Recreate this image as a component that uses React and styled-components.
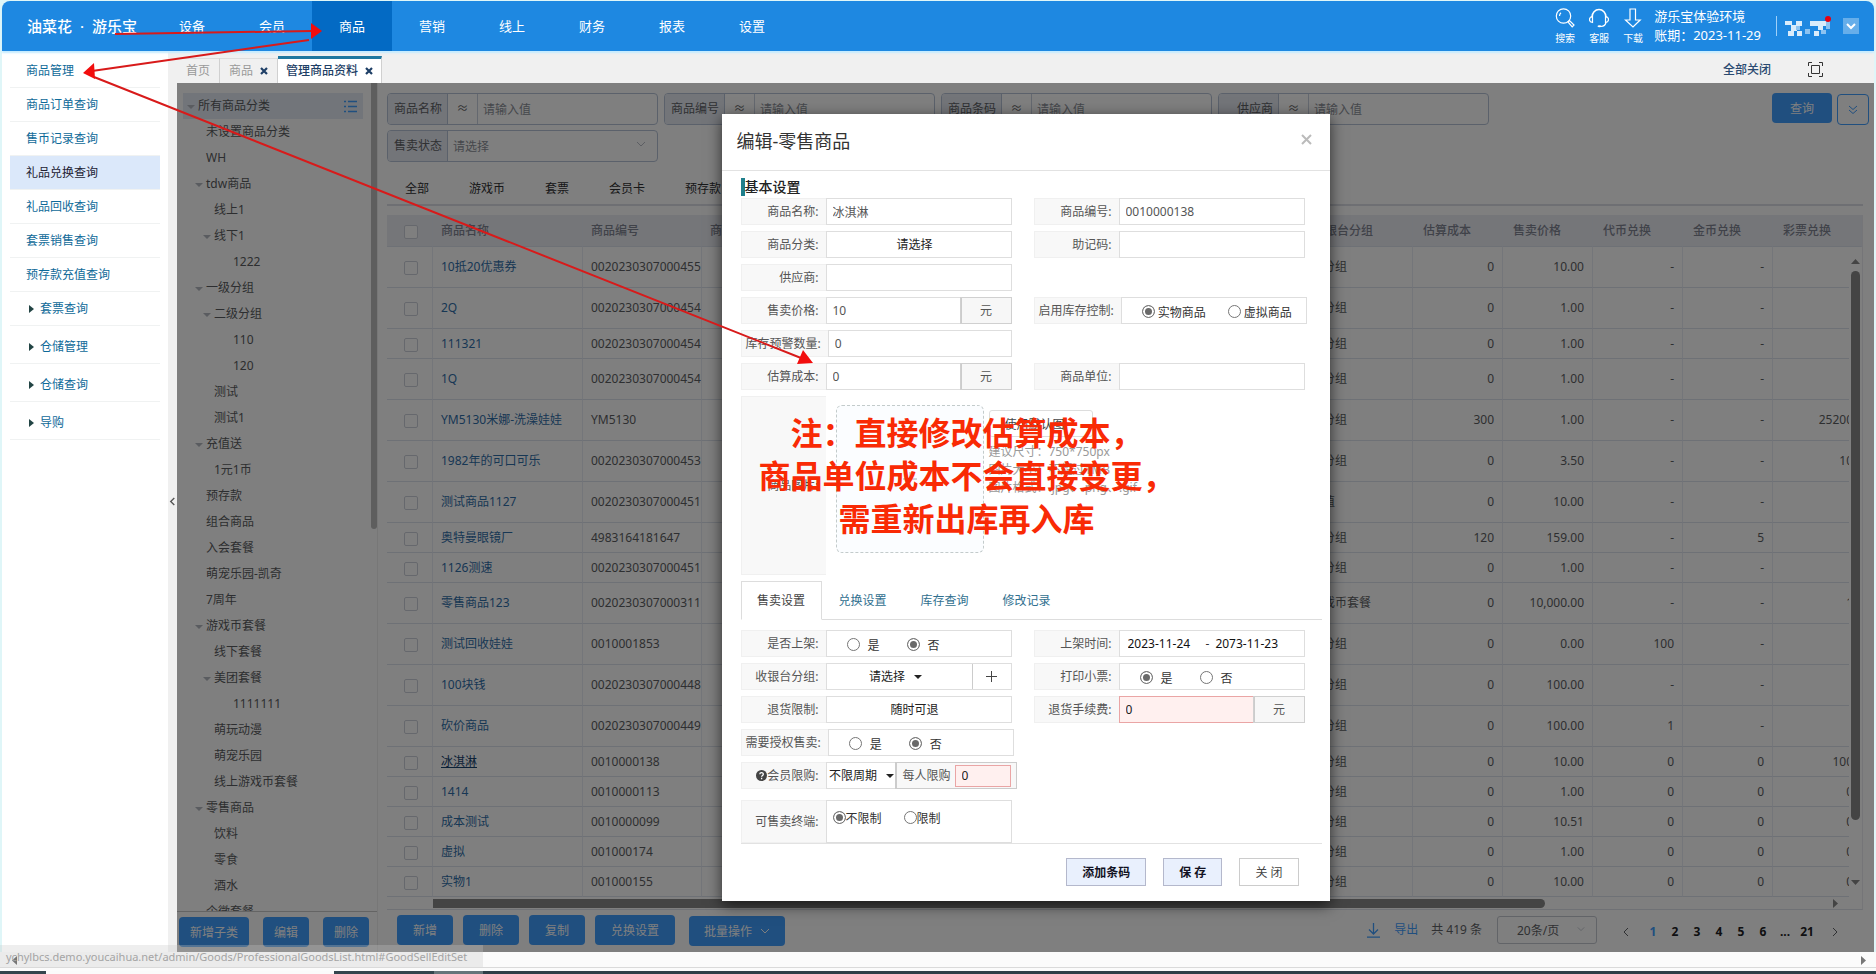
import React from "react";
import styled, { createGlobalStyle, css } from "styled-components";

const Global = createGlobalStyle`
  *, *::before, *::after { box-sizing: border-box; }
  html, body, #root { height: 100%; }
  body { margin: 0; background: #f6f8f8; overflow: hidden; }
  body, button, input, select, textarea {
    font-family: "Noto Sans", "Noto Sans CJK SC", "Liberation Sans", sans-serif;
    font-size: 12px;
  }
  a { text-decoration: none; }
  ul { list-style: none; margin: 0; padding: 0; }
`;

/* ---------- shell ---------- */
const Page = styled.div`
  position: relative;
  height: 100vh;
  padding: 1px 2px 0;
  display: flex;
  flex-direction: column;
  color: #333;
  line-height: 18px;
  background: #dff6f8;
`;
const Header = styled.header`
  position: relative;
  flex: none;
  height: 50px;
  display: flex;
  align-items: center;
  border-radius: 8px 8px 0 0;
  background: #1e88e1;
  color: #fff;
  box-shadow: 0 2px 2px #c4ebff;
  z-index: 1;
`;
const Logo = styled.a`
  width: 150px;
  padding-left: 25px;
  display: flex;
  gap: 8px;
  color: #fff;
  font-size: 15px;
  font-weight: 500;
`;
const Nav = styled.nav`
  display: flex;
  height: 100%;
  flex: 1;
`;
const NavLink = styled.a`
  width: 80px;
  display: flex;
  align-items: center;
  justify-content: center;
  font-size: 13px;
  color: #fff;
  background: ${(p) => (p.$active ? "#036ac4" : "transparent")};
`;
const Tools = styled.div`
  display: flex;
  align-items: center;
  padding-right: 15px;
`;
const Tool = styled.a`
  width: 34px;
  display: flex;
  flex-direction: column;
  align-items: center;
  gap: 3px;
  font-size: 10px;
  line-height: 14px;
  color: #fff;
`;
const Env = styled.div`
  padding: 0 15px 0 4px;
  font-size: 13px;
  line-height: 19px;
  white-space: nowrap;
`;
const Divider = styled.i`
  width: 1px;
  height: 20px;
  background: #9fd0f8;
`;
const Avatar = styled.span`
  padding: 0 10px 0 8px;
  display: flex;
`;
const Drop = styled.button`
  width: 16px;
  height: 16px;
  padding: 0;
  border: 0;
  background: #66aeea;
  display: flex;
  align-items: center;
  justify-content: center;
`;
const Middle = styled.div`
  flex: 1;
  min-height: 0;
  display: flex;
`;
const Sidebar = styled.nav`
  flex: none;
  width: 166px;
  padding: 3px 8px 0;
  background: #fff;
`;
const SideLink = styled.a`
  display: flex;
  align-items: center;
  gap: 6px;
  height: ${(p) => (p.$group ? 38 : 34)}px;
  padding-top: ${(p) => (p.$group ? 4 : 0)}px;
  padding-left: ${(p) => (p.$arrow ? 19 : 16)}px;
  border-bottom: 1px solid #f0f2f2;
  color: ${(p) => (p.$active ? "#223" : "#0f6a99")};
  background: ${(p) => (p.$active ? "#dbe8fa" : "transparent")};
`;
const Collapse = styled.button`
  flex: none;
  width: 9px;
  padding: 0;
  border: 0;
  background: #f0f0f0;
  display: flex;
  align-items: center;
  justify-content: center;
`;
const Work = styled.div`
  flex: 1;
  min-width: 0;
  display: flex;
  flex-direction: column;
`;
const PageTabs = styled.div`
  flex: none;
  height: 32px;
  display: flex;
  align-items: flex-end;
  background: #f0f0f0;
  padding-right: 51px;
`;
const PageTab = styled.a`
  height: ${(p) => (p.$active ? 27 : 25)}px;
  display: flex;
  align-items: center;
  gap: 7px;
  padding: 0 ${(p) => (p.$active ? 8 : 9)}px;
  border-right: 1px solid #d0d0d0;
  border-top: ${(p) => (p.$active ? "3px solid #1f78a0" : "1px solid #ddd")};
  background: ${(p) => (p.$active ? "#fff" : "#f0f0f0")};
  color: ${(p) => (p.$active ? "#1e3f66" : "#999")};
  font-weight: ${(p) => (p.$active ? 500 : 400)};
`;
const TabX = styled.span`
  color: #1e3f66;
  display: flex;
`;
const CloseAll = styled.a`
  margin-left: auto;
  padding-bottom: 4px;
  color: #2a4a70;
  font-weight: 500;
`;
const FullBtn = styled.button`
  margin-left: 37px;
  padding: 0 0 6px;
  border: 0;
  background: none;
  display: flex;
`;
const Stage = styled.div`
  position: relative;
  flex: 1;
  min-height: 0;
  display: flex;
  background: #fff;
`;
const Bottom = styled.div`
  flex: none;
  height: 22px;
  margin: 0 -2px;
  background: #fbfbfb;
  border-bottom: 3px solid #2f3f47;
  display: flex;
  align-items: flex-start;
  justify-content: space-between;
  padding: 4px 8px 0 10px;
`;
const Tray = styled.div`
  position: absolute;
  left: 0;
  right: 0;
  bottom: 0;
  height: 7px;
  border-top: 1px solid #dadada;
  display: flex;
  align-items: flex-end;
`;
const TrayPart = styled.i`
  height: 3px;
  width: ${(p) => p.$w}px;
  background: ${(p) => p.$c};
`;
const Status = styled.div`
  position: absolute;
  left: 0;
  bottom: 7px;
  width: 483px;
  height: 22px;
  padding: 3px 6px 0;
  font-size: 11px;
  background: rgba(200, 200, 200, 0.3);
  color: #a4a4a4;
  white-space: nowrap;
`;

/* ---------- category tree ---------- */
const TreePane = styled.aside`
  flex: none;
  width: 200px;
  display: flex;
  flex-direction: column;
  position: relative;
`;
const TreeScroll = styled.div`
  flex: 1;
  min-height: 0;
  overflow: hidden;
  padding: 10px 14px 0 6px;
`;
const TreeRow = styled.li`
  height: 26px;
  display: flex;
  align-items: center;
  padding-left: ${(p) => [15, 23, 31, 50][p.$level]}px;
  color: #5a5c60;
  background: ${(p) => (p.$level === 0 ? "#e4ebf4" : "transparent")};
`;
const Fold = styled.i`
  width: 0;
  margin: 2px 3px 0 -11px;
  border: 4px solid transparent;
  border-top-color: #b4b8c0;
  border-bottom: 0;
`;
const TreeMenu = styled.button`
  margin: 0 6px 0 auto;
  padding: 0;
  border: 0;
  background: none;
  display: flex;
`;
const TreeThumb = styled.i`
  position: absolute;
  right: 0;
  top: 0;
  width: 6px;
  height: 446px;
  background: #bcbcbc;
  border-radius: 0 0 3px 3px;
`;
const TreeFoot = styled.div`
  flex: none;
  height: 41px;
  padding: 5px 8px 0 2px;
  display: flex;
  justify-content: space-between;
  align-items: flex-start;
  border-top: 1px solid #c8c8c8;
`;

/* ---------- list ---------- */
const Main = styled.main`
  flex: 1;
  min-width: 0;
  display: flex;
  flex-direction: column;
  border-left: 1px solid #efefef;
  padding: 10px 0 0 9px;
`;
const Filters = styled.form`
  flex: none;
  display: flex;
  align-items: flex-start;
  padding-right: 5px;
`;
const FilterGrid = styled.div`
  flex: 1;
  display: grid;
  grid-template-columns: repeat(4, 271px);
  gap: 5px 6px;
`;
const Filter = styled.div`
  height: 32px;
  display: flex;
  align-items: stretch;
  border: 1px solid #b6c2d6;
  border-radius: 4px;
  overflow: hidden;
  position: relative;
`;
const FilterLabel = styled.label`
  width: 60px;
  display: flex;
  align-items: center;
  justify-content: flex-end;
  padding-right: 5px;
  background: #e6eaf3;
  border-right: 1px solid #b6c2d6;
  color: #606266;
`;
const Approx = styled.span`
  width: 30px;
  display: flex;
  align-items: center;
  justify-content: center;
  border-right: 1px solid #c8d0de;
  color: #666;
`;
const FilterInput = styled.input`
  flex: 1;
  min-width: 0;
  border: 0;
  padding: 0 5px;
  background: none;
  &::placeholder { color: #8c9098; }
`;
const FilterSelect = styled.select`
  flex: 1;
  appearance: none;
  border: 0;
  padding: 0 5px;
  background: none;
  color: #8c9098;
`;
const SelectMark = styled.span`
  position: absolute;
  right: 11px;
  top: 8px;
  display: flex;
  pointer-events: none;
`;
const Btn = styled.button`
  flex: none;
  height: 30px;
  padding: 0 ${(p) => p.$pad || 15}px;
  border: 0;
  border-radius: 4px;
  display: flex;
  align-items: center;
  gap: 8px;
  background: #409eff;
  color: #fff;
  white-space: nowrap;
`;
const MenuBtn = styled(Btn)`
  margin: 1px 0 0 4px;
`;
const MoreBtn = styled.button`
  width: 32px;
  height: 31px;
  margin: 1px 0 0 5px;
  padding: 0;
  border: 1px solid #409eff;
  border-radius: 4px;
  background: none;
  display: flex;
  align-items: center;
  justify-content: center;
`;
const Kinds = styled.nav`
  flex: none;
  height: 44px;
  margin-right: 11px;
  padding: 9px 18px 0;
  display: flex;
  gap: 40px;
  border-bottom: 2px solid #dcdfe6;
  line-height: 36px;
`;
const Kind = styled.a`
  color: #303133;
  white-space: nowrap;
`;
const TableBox = styled.div`
  flex: 1 1 auto;
  min-height: 0;
  margin: 9px 11px 0 0;
  position: relative;
  overflow: hidden;
  border-right: 1px solid #ebebf0;
  border-bottom: 1px solid #dfe3ea;
`;
const Table = styled.table`
  width: 100%;
  table-layout: fixed;
  border-collapse: separate;
  border-spacing: 0;
`;
const cell = css`
  padding: 0 8px;
  border-right: 1px solid #e8ecf4;
  border-bottom: 1px solid #dde2ec;
  text-align: left;
  font-weight: 400;
  overflow: hidden;
  white-space: nowrap;
`;
const Th = styled.th`
  ${cell}
  padding-left: ${(p) => (p.$num ? 10 : 8)}px;
  height: 32px;
  background: #ebecf2;
  color: #808592;
  font-weight: 500;
`;
const Td = styled.td`
  ${cell}
  height: ${(p) => (p.$tall ? 41 : 30)}px;
  color: #5c5e62;
  text-align: ${(p) => p.$align || "left"};
`;
const Check = styled.input`
  appearance: none;
  display: block;
  width: 14px;
  height: 14px;
  margin: 2px 0 0 9px;
  border: 1px solid #cdd1da;
  border-radius: 2px;
  background: #fff;
`;
const Goods = styled.a`
  color: ${(p) => (p.$current ? "#16426e" : "#2f6ea8")};
  text-decoration: ${(p) => (p.$current ? "underline" : "none")};
`;
const VLane = styled.div`
  position: absolute;
  top: 32px;
  right: 0;
  bottom: 12px;
  width: 13px;
  padding: 10px 0;
  background: #fff;
  display: flex;
  flex-direction: column;
  align-items: center;
`;
const VThumb = styled.i`
  width: 9px;
  height: 549px;
  margin: 5px 0 auto;
  background: #888;
  border-radius: 5px;
`;
const HLane = styled.div`
  position: absolute;
  left: 46px;
  right: 0;
  bottom: 0;
  height: 12px;
  padding-right: 22px;
  background: #fff;
  display: flex;
  align-items: center;
  justify-content: space-between;
`;
const HThumb = styled.i`
  width: 79%;
  height: 9px;
  background: #888;
  border-radius: 0 5px 5px 0;
`;
const Foot = styled.div`
  flex: none;
  height: 42px;
  padding: 5px 34px 0 10px;
  display: flex;
  align-items: flex-start;
  gap: 10px;
`;
const Pager = styled.div`
  margin-left: auto;
  height: 30px;
  display: flex;
  align-items: center;
  color: #606266;
`;
const ExportLink = styled.a`
  display: flex;
  align-items: center;
  gap: 14px;
  margin-right: 13px;
  color: #409eff;
`;
const SizeBox = styled.label`
  position: relative;
  width: 100px;
  height: 28px;
  margin: 0 24px 0 15px;
  border: 1px solid #c4c8d0;
  border-radius: 3px;
  display: flex;
`;
const SizeSelect = styled.select`
  flex: 1;
  appearance: none;
  border: 0;
  padding: 0 0 0 19px;
  background: none;
  color: #606266;
`;
const PageNo = styled.a`
  width: 22px;
  padding-top: 3px;
  text-align: center;
  font-weight: 700;
  color: ${(p) => (p.$on ? "#409eff" : "#202124")};
`;
const Step = styled.button`
  width: ${(p) => p.$w}px;
  padding: 3px 0 0;
  border: 0;
  background: none;
  display: flex;
  justify-content: ${(p) => p.$side};
`;

/* ---------- dialog ---------- */
const Mask = styled.div`
  position: absolute;
  inset: 0;
  background: rgba(0, 0, 0, 0.5);
  display: flex;
  justify-content: center;
  align-items: flex-start;
  padding-top: 31px;
`;
const Dialog = styled.section`
  position: relative;
  width: 608px;
  background: #fff;
  box-shadow: 0 4px 14px rgba(0, 0, 0, 0.65);
`;
const DialogHead = styled.header`
  height: 57px;
  padding: 0 18px 2px 15px;
  display: flex;
  align-items: center;
  justify-content: space-between;
  border-bottom: 1px solid #e2e2e2;
`;
const DialogTitle = styled.h2`
  margin: 0;
  font-size: 18px;
  font-weight: 400;
  color: #333;
`;
const CloseX = styled.button`
  padding: 0 0 4px;
  border: 0;
  background: none;
  display: flex;
`;
const DialogBody = styled.form`
  padding: 7px 8px 15px 19px;
`;
const SectionTitle = styled.h3`
  margin: 0 0 2px;
  height: 18px;
  border-left: 4px solid #1f7f8c;
  font-size: 14px;
  line-height: 18px;
  font-weight: 500;
  color: #222;
`;
const Rows = styled.div`
  display: grid;
  grid-template-columns: 271px 271px;
  column-gap: 22px;
  row-gap: 6px;
`;
const Field = styled.div`
  grid-column: ${(p) => (p.$right ? 2 : 1)};
  height: ${(p) => p.$h || 27}px;
  margin-top: ${(p) => p.$mt || 0}px;
  display: flex;
`;
const Label = styled.label`
  flex: none;
  min-width: 85px;
  padding: 0 7px 0 4px;
  display: flex;
  align-items: center;
  justify-content: flex-end;
  background: #f8f8f8;
  border: 1px solid #f0f0f0;
  border-right: 0;
  color: #555;
  white-space: nowrap;
`;
const Control = styled.div`
  flex: 1 0 ${(p) => (p.$keep ? 186 : 0)}px;
  min-width: 0;
  display: flex;
  align-items: stretch;
  border: 1px solid #dedede;
  background: #fff;
`;
const Text = styled.input`
  flex: 1;
  min-width: 0;
  border: 0;
  padding: 0 6px;
  color: #555;
  background: none;
  ${(p) => p.$warn && css`
    background: #fff0ef;
    box-shadow: 0 0 0 1px #eaa5a5;
    color: #222;
  `}
`;
const Unit = styled.span`
  width: 50px;
  display: flex;
  align-items: center;
  justify-content: center;
  border-left: 1px solid #ccc;
  box-shadow: 0 0 0 1px #d0d0d0;
  background: #f7f7f7;
  color: #555;
`;
const Pick = styled.select`
  appearance: none;
  border: 0;
  padding: 0 8px 0 0;
  flex: ${(p) => (p.$wide ? 1 : "none")};
  text-align: center;
  text-align-last: center;
  background: none;
  color: #222;
`;
const PickBox = styled.span`
  flex: ${(p) => (p.$w ? "none" : 1)};
  width: ${(p) => (p.$w ? p.$w + "px" : "auto")};
  display: flex;
  align-items: center;
  justify-content: center;
  padding-right: ${(p) => (p.$w ? 0 : 8)}px;
  white-space: nowrap;
`;
const Caret = styled.i`
  border: 4px solid transparent;
  border-top-color: #222;
  border-bottom: 0;
`;
const AddBtn = styled.button`
  width: 39px;
  padding: 0;
  border: 0;
  border-left: 1px solid #ccc;
  background: #fff;
  display: flex;
  align-items: center;
  justify-content: center;
`;
const Radios = styled.div`
  flex: 1;
  display: flex;
  align-items: center;
  gap: ${(p) => p.$gap}px;
  padding: ${(p) => p.$pad || "2px 0 0"};
  padding-left: ${(p) => p.$pl}px;
`;
const RadioLabel = styled.label`
  display: flex;
  align-items: center;
  gap: ${(p) => p.$gap}px;
  color: #333;
  span { padding-top: 2px; }
`;
const Radio = styled.input`
  appearance: none;
  flex: none;
  width: 13px;
  height: 13px;
  margin: 0;
  border: 1px solid #767676;
  border-radius: 50%;
  background: #fff;
  &:checked {
    background: #6a6a6a;
    box-shadow: inset 0 0 0 2px #fff;
  }
`;
const DateText = styled.input`
  width: ${(p) => p.$w}px;
  border: 0;
  padding: 0;
  background: none;
  color: #111;
`;
const Limit = styled.div`
  flex: 1;
  display: flex;
  align-items: center;
  gap: 5px;
  padding: 0 6px;
  background: #f8f8f8;
  border-left: 1px solid #ccc;
  box-shadow: 0 0 0 1px #ccc;
  color: #555;
  white-space: nowrap;
`;
const LimitInput = styled(Text)`
  flex: none;
  width: 54px;
  height: 20px;
`;
const Upload = styled.div`
  grid-column: 1 / 3;
  height: 179px;
  display: flex;
`;
const DropZone = styled.button`
  width: 148px;
  height: 148px;
  margin: 9px 0 0 10px;
  padding: 0;
  border: 1px dashed #c3cbcb;
  border-radius: 6px;
  background: #fbfdff;
  display: flex;
  align-items: center;
  justify-content: center;
`;
const UploadInfo = styled.div`
  padding: 14px 0 0 5px;
  color: #999;
`;
const DefaultBtn = styled.button`
  display: block;
  width: 104px;
  height: 27px;
  margin-bottom: 6px;
  padding: 0 12px 0 0;
  border: 1px solid #ddd;
  border-radius: 3px;
  background: #fff;
  color: #444;
`;
const SubTabs = styled.nav`
  margin: 6px 0 10px;
  height: 39px;
  display: flex;
  border-bottom: 1px solid #ddd;
`;
const SubTab = styled.a`
  width: ${(p) => (p.$active ? 81 : 82)}px;
  height: 39px;
  display: flex;
  align-items: center;
  justify-content: center;
  color: ${(p) => (p.$active ? "#444" : "#31708f")};
  ${(p) => p.$active && css`
    border: 1px solid #ddd;
    border-bottom: 1px solid #fff;
  `}
`;
const Actions = styled.div`
  border-top: 1px solid #e2e2e2;
  padding: 14px 23px 0 0;
  display: flex;
  justify-content: flex-end;
  gap: 17px;
`;
const Act = styled.button`
  height: 28px;
  padding: 0 15px;
  border: 1px solid ${(p) => (p.$plain ? "#ccc" : "#b4b8cc")};
  background: ${(p) => (p.$plain ? "#fff" : "#e9f0fd")};
  color: ${(p) => (p.$plain ? "#444" : "#112")};
  font-weight: ${(p) => (p.$plain ? 400 : 600)};
`;
const Note = styled.p`
  position: absolute;
  left: 37px;
  top: 297px;
  width: 416px;
  margin: 0;
  text-align: center;
  font-size: 32px;
  line-height: 43px;
  font-weight: 700;
  color: #f92a05;
  white-space: nowrap;
  pointer-events: none;
`;
const Marks = styled.svg`
  position: absolute;
  left: 0;
  top: 0;
  z-index: 3;
  pointer-events: none;
`;

/* ---------- small drawings ---------- */
const Tri = ({ d, color = "#555" }) => (
  <svg width="9" height="9" viewBox="0 0 9 9" aria-hidden="true">
    <path d={{ up: "M0 7l4.500-5 4.500 5z", down: "M0 2l4.500 5 4.500-5z", left: "M7 0L2 4.500 7 9z", right: "M2 0l5 4.500-5 4.500z" }[d]} fill={color} />
  </svg>
);
const Chevron = ({ d, color, size = 10, width = 1 }) => (
  <svg width={size} height={size} viewBox="0 0 10 10" fill="none" stroke={color} strokeWidth={width} aria-hidden="true">
    <path d={{ down: "M1 3l4 4 4-4", left: "M7 1L3 5l4 4", right: "M3 1l4 4-4 4" }[d]} />
  </svg>
);
const BoldX = () => (
  <svg width="8" height="8" viewBox="0 0 8 8" stroke="#1e3f66" strokeWidth="2.200" aria-hidden="true">
    <path d="M1 1l6 6M7 1L1 7" />
  </svg>
);
const SearchIcon = () => (
  <svg width="20" height="20" viewBox="0 0 20 20" fill="none" stroke="#fff" strokeWidth="1.200">
    <circle cx="8.500" cy="8" r="7.200" />
    <path d="M4.500 8a4 4 0 0 1 1.500-3.200M13 14l1.500-1.500 4.500 4.500-1.800 1.800z" />
  </svg>
);
const ServiceIcon = () => (
  <svg width="20" height="20" viewBox="0 0 20 20" fill="none" stroke="#fff" strokeWidth="1.200">
    <path d="M3 9a7 7.500 0 0 1 14 0" strokeWidth="1.600" />
    <path d="M3.500 8.500c-2.300.3-3 1.700-3 3s.8 2.800 3 3zM16.500 8.500c2.300.3 3 1.700 3 3s-.8 2.800-3 3zM17 14.500c-.6 2.600-2.600 3.800-5 4" />
    <ellipse cx="10.500" cy="18.300" rx="2" ry="1" fill="#fff" stroke="none" />
  </svg>
);
const DownIcon = () => (
  <svg width="18" height="20" viewBox="0 0 18 20" fill="none" stroke="#fff" strokeWidth="1.200">
    <path d="M6 1h5.500v11h4.700L9 19 1.500 12H6z" />
  </svg>
);
const Mosaic = () => (
  <svg width="48" height="30" viewBox="0 0 48 30">
    <g fill="#d9ecfb">
      <path d="M0 10h7v4H0zM11 10h6v5h-6zM6 14h6v6H6zM3 20h6v5H3zM12 20h5v5h-5zM25 10h16v5H25zM33 15h5v4h-5zM29 20h5v5h-5z" />
    </g>
    <path d="M20 18h5v5h-5zM36 19h5v4h-5zM41 10h4v8h-4zM11 15h4v4h-4z" fill="#8cc3f1" />
    <circle cx="43" cy="8" r="3" fill="#e60012" />
  </svg>
);
const FullIcon = () => (
  <svg width="15" height="15" viewBox="0 0 15 15" fill="none" stroke="#333" strokeWidth="1">
    <path d="M.5 4V.5H4M11 .5h3.500V4M14.500 11v3.500H11M4 14.500H.5V11M3.500 3.500h8v8h-8z" />
  </svg>
);

/* ---------- data ---------- */
const NAV = ["设备", "会员", "商品", "营销", "线上", "财务", "报表", "设置"];
const SIDE = ["商品管理", "商品订单查询", "售币记录查询", "礼品兑换查询", "礼品回收查询", "套票销售查询", "预存款充值查询", "套票查询", "仓储管理", "仓储查询", "导购"];
const TREE = [
  [0, "所有商品分类", 1], [1, "未设置商品分类"], [1, "WH"], [1, "tdw商品", 1], [2, "线上1"], [2, "线下1", 1], [3, "1222"],
  [1, "一级分组", 1], [2, "二级分组", 1], [3, "110"], [3, "120"], [2, "测试"], [2, "测试1"], [1, "充值送", 1], [2, "1元1币"],
  [1, "预存款"], [1, "组合商品"], [1, "入会套餐"], [1, "萌宠乐园-凯奇"], [1, "7周年"], [1, "游戏币套餐", 1], [2, "线下套餐"],
  [2, "美团套餐", 1], [3, "1111111"], [2, "萌玩动漫"], [2, "萌宠乐园"], [2, "线上游戏币套餐"], [1, "零售商品", 1],
  [2, "饮料"], [2, "零食"], [2, "酒水"], [1, "企微套餐"],
];
const G = "未分组";
const GOODS = [
  [1, "10抵20优惠券", "0020230307000455", G, "0", "10.00", "-", "-", "-"],
  [1, "2Q", "0020230307000454", G, "0", "1.00", "-", "-", "-"],
  [0, "111321", "0020230307000454", G, "0", "1.00", "-", "-", "-"],
  [1, "1Q", "0020230307000454", G, "0", "1.00", "-", "-", "-"],
  [1, "YM5130米娜-洗澡娃娃", "YM5130", G, "300", "1.00", "-", "-", "25200"],
  [1, "1982年的可口可乐", "0020230307000453", G, "0", "3.50", "-", "-", "10"],
  [1, "测试商品1127", "0020230307000451", "充值", "0", "10.00", "-", "-", "-"],
  [0, "奥特曼眼镜厂", "4983164181647", G, "120", "159.00", "-", "5", "-"],
  [0, "1126测速", "0020230307000451", G, "0", "1.00", "-", "-", "-"],
  [1, "零售商品123", "0020230307000311", "游戏币套餐", "0", "10,000.00", "-", "-", "1"],
  [1, "测试回收娃娃", "0010001853", G, "0", "0.00", "100", "-", "-"],
  [1, "100块钱", "0020230307000448", G, "0", "100.00", "-", "-", "-"],
  [1, "砍价商品", "0020230307000449", G, "0", "100.00", "1", "-", "-"],
  [0, "冰淇淋", "0010000138", G, "0", "10.00", "0", "0", "100"],
  [0, "1414", "0010000113", G, "0", "1.00", "0", "0", "0"],
  [0, "成本测试", "0010000099", G, "0", "10.51", "0", "0", "0"],
  [0, "虚拟", "001000174", G, "0", "1.00", "0", "0", "0"],
  [0, "实物1", "001000155", G, "0", "10.00", "0", "0", "0"],
];
const COLUMNS = ["商品名称", "商品编号", "商品条码", "收银台分组", "估算成本", "售卖价格", "代币兑换", "金币兑换", "彩票兑换"];

const TextField = ({ id, label, value = "", right, unit, warn }) => (
  <Field $right={right}>
    <Label htmlFor={id}>{label}</Label>
    <Control>
      <Text id={id} defaultValue={value} $warn={warn} />
      {unit && <Unit>{unit}</Unit>}
    </Control>
  </Field>
);
const RadioField = ({ name, label, options, checked, right, keep, pl = 20, gap = 43, inner = 8, h, mt, pad }) => (
  <Field $right={right} $h={h} $mt={mt}>
    <Label as="span">{label}</Label>
    <Control $keep={keep}>
      <Radios role="radiogroup" aria-label={label} $pl={pl} $gap={gap} $pad={pad}>
        {options.map((o, i) => (
          <RadioLabel key={o} $gap={inner}>
            <Radio type="radio" name={name} defaultChecked={i === checked} />
            <span>{o}</span>
          </RadioLabel>
        ))}
      </Radios>
    </Control>
  </Field>
);

const EditDialog = () => (
  <Dialog role="dialog" aria-label="编辑-零售商品">
    <DialogHead>
      <DialogTitle>编辑-零售商品</DialogTitle>
      <CloseX type="button" aria-label="关闭">
        <svg width="11" height="11" viewBox="0 0 11 11" stroke="#bbb" strokeWidth="2"><path d="M1 1l9 9M10 1l-9 9" /></svg>
      </CloseX>
    </DialogHead>
    <DialogBody>
      <SectionTitle>基本设置</SectionTitle>
      <Rows>
        <TextField id="name" label="商品名称:" value="冰淇淋" />
        <TextField id="code" label="商品编号:" value="0010000138" right />
        <Field>
          <Label htmlFor="cat">商品分类:</Label>
          <Control><Pick id="cat" $wide><option>请选择</option></Pick></Control>
        </Field>
        <TextField id="memo" label="助记码:" right />
        <TextField id="supplier" label="供应商:" />
        <TextField id="price" label="售卖价格:" value="10" unit="元" />
        <RadioField name="stock" label="启用库存控制:" options={["实物商品", "虚拟商品"]} checked={0} right keep inner={3} gap={22} />
        <TextField id="warnqty" label="库存预警数量:" value="0" />
        <TextField id="cost" label="估算成本:" value="0" unit="元" />
        <TextField id="uom" label="商品单位:" right />
        <Upload>
          <Label as="span">商品图片:</Label>
          <DropZone type="button" aria-label="上传商品图片">
            <svg width="16" height="16" viewBox="0 0 16 16" stroke="#aaa"><path d="M8 1v14M1 8h14" /></svg>
          </DropZone>
          <UploadInfo>
            <DefaultBtn type="button">使用默认图</DefaultBtn>
            <div>建议尺寸：750*750px</div>
            <div>图片大小：不超过1MB</div>
            <div>图片格式：.jpg、.png、.gif</div>
          </UploadInfo>
        </Upload>
      </Rows>
      <SubTabs>
        <SubTab href="#sell" $active>售卖设置</SubTab>
        <SubTab href="#swap">兑换设置</SubTab>
        <SubTab href="#stock">库存查询</SubTab>
        <SubTab href="#log">修改记录</SubTab>
      </SubTabs>
      <Rows>
        <RadioField name="onsale" label="是否上架:" options={["是", "否"]} checked={1} gap={27} />
        <Field $right>
          <Label htmlFor="from">上架时间:</Label>
          <Control>
            <Radios $pl={8} $gap={6} $pad="0">
              <DateText id="from" $w={72} defaultValue="2023-11-24" />
              <span>-</span>
              <DateText aria-label="结束时间" $w={72} defaultValue="2073-11-23" />
            </Radios>
          </Control>
        </Field>
        <Field>
          <Label htmlFor="group">收银台分组:</Label>
          <Control>
            <PickBox><Pick id="group"><option>请选择</option></Pick><Caret /></PickBox>
            <AddBtn type="button" aria-label="新增分组">
              <svg width="11" height="11" viewBox="0 0 11 11" stroke="#444"><path d="M5.500 0v11M0 5.500h11" /></svg>
            </AddBtn>
          </Control>
        </Field>
        <RadioField name="print" label="打印小票:" options={["是", "否"]} checked={0} right gap={27} />
        <Field>
          <Label htmlFor="refund">退货限制:</Label>
          <Control><Pick id="refund" $wide><option>随时可退</option></Pick></Control>
        </Field>
        <TextField id="fee" label="退货手续费:" value="0" unit="元" warn right />
        <RadioField name="auth" label="需要授权售卖:" options={["是", "否"]} checked={1} keep gap={27} />
        <Field>
          <Label htmlFor="period">
            <svg width="11" height="11" viewBox="0 0 11 11"><circle cx="5.500" cy="5.500" r="5.500" fill="#444" /><path d="M3.800 4.300c0-2.300 3.500-2.300 3.500-.1 0 1.300-1.700 1.200-1.700 2.600M5.600 7.800v1.400" fill="none" stroke="#fff" strokeWidth="1.300" /></svg>
            会员限购:
          </Label>
          <Control $keep>
            <PickBox $w={69}><Pick id="period"><option>不限周期</option></Pick><Caret /></PickBox>
            <Limit>
              <label htmlFor="limit">每人限购</label>
              <LimitInput id="limit" $warn defaultValue="0" />
            </Limit>
          </Control>
        </Field>
        <RadioField name="term" label="可售卖终端:" options={["不限制", "限制"]} checked={0} pl={6} inner={0} gap={22} h={43} mt={5} pad="0 0 8px" />
      </Rows>
      <Actions>
        <Act type="button">添加条码</Act>
        <Act type="button">保 存</Act>
        <Act type="button" $plain>关 闭</Act>
      </Actions>
    </DialogBody>
    <Note>注：直接修改估算成本，<br />商品单位成本不会直接变更，<br />需重新出库再入库</Note>
  </Dialog>
);

const GoodsTable = () => (
  <TableBox>
    <Table>
      <colgroup>
        <col style={{ width: 46 }} /><col style={{ width: 150 }} /><col style={{ width: 119 }} /><col />
        <col style={{ width: 110 }} />
        {[90, 90, 90, 90, 89].map((w, i) => <col key={i} style={{ width: w }} />)}
      </colgroup>
      <thead>
        <tr>
          <Th><Check type="checkbox" aria-label="全选" /></Th>
          {COLUMNS.map((h, i) => <Th key={h} $num={i > 2}>{h}</Th>)}
        </tr>
      </thead>
      <tbody>
        {GOODS.map(([tall, name, code, group, ...nums], r) => (
          <tr key={r}>
            <Td $tall={tall}><Check type="checkbox" aria-label={name} /></Td>
            <Td><Goods href="#edit" $current={name === "冰淇淋"}>{name}</Goods></Td>
            <Td>{code}</Td>
            <Td />
            <Td>{group}</Td>
            {nums.map((n, i) => <Td key={i} $align="right">{n}</Td>)}
          </tr>
        ))}
      </tbody>
    </Table>
    <VLane><Tri d="up" color="#888" /><VThumb /><Tri d="down" color="#888" /></VLane>
    <HLane><HThumb /><Tri d="right" color="#888" /></HLane>
  </TableBox>
);

export default function App() {
  return (
    <Page>
      <Global />
      <Header>
        <Logo href="#home"><span>油菜花</span><span>·</span><span>游乐宝</span></Logo>
        <Nav>{NAV.map((n) => <NavLink key={n} href="#nav" $active={n === "商品"}>{n}</NavLink>)}</Nav>
        <Tools>
          <Tool href="#search"><SearchIcon />搜索</Tool>
          <Tool href="#service"><ServiceIcon />客服</Tool>
          <Tool href="#download"><DownIcon />下载</Tool>
          <Env>游乐宝体验环境<br />账期：2023-11-29</Env>
          <Divider />
          <Avatar><Mosaic /></Avatar>
          <Drop type="button" aria-label="账户菜单"><Chevron d="down" color="#fff" width={2} /></Drop>
        </Tools>
      </Header>
      <Middle>
        <Sidebar>
          {SIDE.map((s, i) => (
            <SideLink key={s} href="#side" $arrow={i > 6} $group={i > 7} $active={i === 3}>
              {i > 6 && <svg width="5" height="8" viewBox="0 0 5 8"><path d="M0 0l5 4-5 4z" fill="#244" /></svg>}
              {s}
            </SideLink>
          ))}
        </Sidebar>
        <Collapse type="button" aria-label="收起"><Chevron d="left" color="#555" size={9} width={1.500} /></Collapse>
        <Work>
          <PageTabs>
            <PageTab href="#t0">首页</PageTab>
            <PageTab href="#t1">商品<TabX><BoldX /></TabX></PageTab>
            <PageTab href="#t2" $active>管理商品资料<TabX><BoldX /></TabX></PageTab>
            <CloseAll href="#close">全部关闭</CloseAll>
            <FullBtn type="button" aria-label="全屏"><FullIcon /></FullBtn>
          </PageTabs>
          <Stage>
            <TreePane>
              <TreeScroll>
                <ul>
                  {TREE.map(([level, text, open], i) => (
                    <TreeRow key={i} $level={level}>
                      {open && <Fold />}
                      {text}
                      {level === 0 && (
                        <TreeMenu type="button" aria-label="分类菜单">
                          <svg width="13" height="13" viewBox="0 0 13 13" stroke="#409eff" strokeWidth="1.500"><path d="M0 1.500h2M4 1.500h9M0 6.500h2M4 6.500h9M0 11.500h2M4 11.500h9" /></svg>
                        </TreeMenu>
                      )}
                    </TreeRow>
                  ))}
                </ul>
              </TreeScroll>
              <TreeFoot>
                <Btn $pad={11}>新增子类</Btn><Btn $pad={11}>编辑</Btn><Btn $pad={11}>删除</Btn>
              </TreeFoot>
              <TreeThumb />
            </TreePane>
            <Main>
              <Filters>
                <FilterGrid>
                  {["商品名称", "商品编号", "商品条码", "供应商"].map((f, i) => (
                    <Filter key={f}>
                      <FilterLabel htmlFor={"f" + i}>{f}</FilterLabel>
                      <Approx>≈</Approx>
                      <FilterInput id={"f" + i} placeholder="请输入值" />
                    </Filter>
                  ))}
                  <Filter>
                    <FilterLabel htmlFor="fs">售卖状态</FilterLabel>
                    <FilterSelect id="fs"><option>请选择</option></FilterSelect>
                    <SelectMark><Chevron d="down" color="#b8bcc6" /></SelectMark>
                  </Filter>
                </FilterGrid>
                <Btn type="button" $pad={18}>查询</Btn>
                <MoreBtn type="button" aria-label="更多条件">
                  <svg width="10" height="10" viewBox="0 0 10 10" fill="none" stroke="#409eff"><path d="M1 1l4 3.500L9 1M1 5l4 3.500L9 5" /></svg>
                </MoreBtn>
              </Filters>
              <Kinds>{["全部", "游戏币", "套票", "会员卡", "预存款"].map((k) => <Kind key={k} href="#kind">{k}</Kind>)}</Kinds>
              <GoodsTable />
              <Foot>
                <Btn $pad={16}>新增</Btn><Btn $pad={16}>删除</Btn><Btn $pad={16}>复制</Btn><Btn $pad={16}>兑换设置</Btn>
                <MenuBtn $pad={15}>批量操作<Chevron d="down" color="#fff" /></MenuBtn>
                <Pager>
                  <ExportLink href="#export">
                    <svg width="13" height="15" viewBox="0 0 13 15" fill="none" stroke="#409eff" strokeWidth="1.300"><path d="M6.500 0v11M2 6.500L6.500 11 11 6.500M0 14.200h13" /></svg>
                    导出
                  </ExportLink>
                  共 419 条
                  <SizeBox>
                    <SizeSelect aria-label="每页条数"><option>20条/页</option></SizeSelect>
                    <SelectMark><Chevron d="down" color="#b8bcc6" size={8} /></SelectMark>
                  </SizeBox>
                  <Step type="button" aria-label="上一页" $w={21} $side="flex-start"><Chevron d="left" color="#606266" /></Step>
                  {["1", "2", "3", "4", "5", "6", "...", "21"].map((n) => <PageNo key={n} href="#page" $on={n === "1"}>{n}</PageNo>)}
                  <Step type="button" aria-label="下一页" $w={22} $side="flex-end"><Chevron d="right" color="#606266" /></Step>
                </Pager>
              </Foot>
            </Main>
            <Mask><EditDialog /></Mask>
          </Stage>
        </Work>
      </Middle>
      <Bottom><Tri d="left" /><Tri d="right" color="#777" /></Bottom>
      <Tray>
        <TrayPart $w={46} $c="#33454d" /><TrayPart $w={288} $c="#fafafa" /><TrayPart $w={100} $c="#33454d" /><TrayPart $w={49} $c="#66757a" />
      </Tray>
      <Status>ychylbcs.demo.youcaihua.net/admin/Goods/ProfessionalGoodsList.html#GoodSellEditSet</Status>
      <Marks width="900" height="400" viewBox="0 0 900 400" aria-hidden="true">
        <g stroke="#d81a1a" strokeWidth="2" fill="none">
          <path d="M115 34L312 31M309 40L92 71M94 77L801 358" />
        </g>
        <path d="M311 23l11 8-11 8zM83 73l11-10 1 16zM813 363l-10-13-6 14z" fill="#f20d0d" />
      </Marks>
    </Page>
  );
}
